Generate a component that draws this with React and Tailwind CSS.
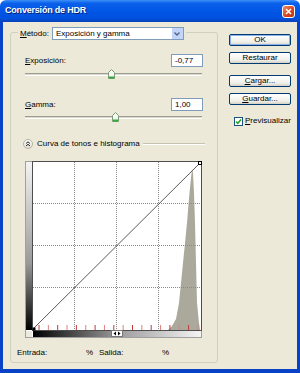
import React from "react";

function U({ children }) {
  return <span className="underline underline-offset-[1px]">{children}</span>;
}

function Thumb() {
  return (
    <svg width="7" height="10" viewBox="0 0 7 10" className="block">
      <path d="M0.5 3.5 L3.5 0.5 L6.5 3.5 V9.5 H0.5 Z" fill="#f7f7f2" stroke="#7d9a7d" />
      <rect x="1" y="7.5" width="5" height="2" fill="#2fb12f" />
    </svg>
  );
}

function Slider({ pos }) {
  return (
    <div className="relative h-[10px] w-[178px]">
      <div className="absolute left-0 right-[1px] top-[4px] h-[3px] border-t border-[#9d9c93] border-b border-b-white bg-[#dcd9cc]" />
      <div className="absolute top-0" style={{ left: pos }}>
        <Thumb />
      </div>
    </div>
  );
}

function Field({ value }) {
  return (
    <div className="w-[32px] h-[13px] bg-white border border-[#7f9db9] pl-[3px] leading-[11px]">{value}</div>
  );
}

function XpButton({ children, primary }) {
  return (
    <div
      className={
        "h-[12px] w-[62px] rounded-[2px] border border-[#003c74] bg-[linear-gradient(#ffffff,#f0f0ea_70%,#d6d0c5)] flex items-center justify-center leading-none " +
        (primary ? "shadow-[inset_0_0_0_1px_#8fb1ea]" : "")
      }
    >
      {children}
    </div>
  );
}

function CurveBox() {
  const ticks = Array.from({ length: 18 }, (_, i) => 14 + i * 9.35);
  const hist =
    "143,169 147,165 151,158 154,142 156,122 159,92 162,62 164,37 166,17 167,8 168,12 169,32 170,62 171,102 172,142 174,162 175,169";
  return (
    <svg width="177" height="177" viewBox="0 0 177 177" className="block">
      <defs>
        <linearGradient id="vg" x1="0" y1="0" x2="0" y2="1">
          <stop offset="0" stopColor="#f4f4f4" />
          <stop offset="0.6" stopColor="#9a9a9a" />
          <stop offset="1" stopColor="#000000" />
        </linearGradient>
        <linearGradient id="hg" x1="0" y1="0" x2="1" y2="0">
          <stop offset="0" stopColor="#000000" />
          <stop offset="0.5" stopColor="#9a9a9a" />
          <stop offset="1" stopColor="#f4f4f4" />
        </linearGradient>
      </defs>
      <rect x="0.5" y="0.5" width="176" height="176" fill="#ffffff" stroke="#a0a0a0" />
      <rect x="1" y="1" width="6" height="168" fill="url(#vg)" />
      <rect x="8" y="170" width="168" height="6" fill="url(#hg)" />
      <rect x="1" y="170" width="6" height="6" fill="#ebe9e0" />
      <polygon points={hist} fill="#aba99b" />
      <g stroke="#8a8a8a" strokeDasharray="1 1" strokeWidth="1">
        <line x1="49.5" y1="1" x2="49.5" y2="169" />
        <line x1="91.5" y1="1" x2="91.5" y2="169" />
        <line x1="133.5" y1="1" x2="133.5" y2="169" />
        <line x1="8" y1="42.5" x2="176" y2="42.5" />
        <line x1="8" y1="84.5" x2="176" y2="84.5" />
        <line x1="8" y1="126.5" x2="176" y2="126.5" />
      </g>
      <rect x="7.5" y="0.5" width="169" height="169" fill="none" stroke="#4e4e4e" />
      {ticks.map((x, i) => (
        <line
          key={i}
          x1={x}
          y1="164"
          x2={x}
          y2="169"
          stroke={i % 2 ? "#e07f7f" : "#c23a3c"}
          strokeWidth="1"
        />
      ))}
      <line x1="9" y1="167" x2="175" y2="2" stroke="#5a5a5a" strokeWidth="1" />
      <rect x="7.5" y="166.5" width="3" height="3" fill="#000" />
      <rect x="173.5" y="0.5" width="3" height="3" fill="#fff" stroke="#000" />
      <rect x="86.5" y="169.5" width="11" height="6" fill="#ffffff" stroke="#777" />
      <polygon points="88.5,172.5 91,170.5 91,174.5" fill="#000" />
      <polygon points="95.5,172.5 93,170.5 93,174.5" fill="#000" />
    </svg>
  );
}

export default function App() {
  return (
    <div className="w-[300px] h-[373px] flex flex-col font-['Liberation_Sans',Arial,sans-serif] text-[8px] text-black overflow-hidden">
      {/* title bar */}
      <div className="h-[22px] shrink-0 flex items-center justify-between pl-[5px] pr-[5px] rounded-t-[6px] bg-[linear-gradient(#3d8ff7_0%,#0a60ea_15%,#0055e5_55%,#0050dc_85%,#0842b8_100%)]">
        <span className="text-white font-bold text-[9px] tracking-[-0.2px] [text-shadow:1px_1px_0_#0a1f6e]">
          Conversión de HDR
        </span>
        <div className="w-[13px] h-[13px] rounded-[3px] border border-white bg-[linear-gradient(135deg,#f08a6a,#d8461e_55%,#b83412)] flex items-center justify-center">
          <svg width="7" height="7" viewBox="0 0 7 7">
            <path d="M1 1 L6 6 M6 1 L1 6" stroke="#fff" strokeWidth="1.6" />
          </svg>
        </div>
      </div>

      {/* body */}
      <div className="flex-1 flex bg-[#ece9d8] border-x-[3px] border-b-[4px] border-[#0842c6]">
        <div className="pl-[7px] pt-[10px]">
          <div className="w-[208px] h-[331px] border border-[#d0d0bf] rounded-[3px] flex flex-col pl-[14px] pr-[14px]">
            {/* header */}
            <div className="-mt-[6px] -ml-[7px] w-fit flex items-center bg-[#ece9d8] pl-[2px] pr-[2px]">
              <span className="mr-[3px]">
                <U>M</U>étodo:
              </span>
              <div className="w-[132px] h-[13px] bg-white border border-[#7f9db9] flex items-center">
                <span className="flex-1 pl-[3px]">Exposición y gamma</span>
                <div className="w-[11px] h-[11px] bg-[#c3d4fb] flex items-center justify-center">
                  <svg width="6" height="4" viewBox="0 0 6 4">
                    <path d="M0.5 0.5 L3 3 L5.5 0.5" fill="none" stroke="#4d6185" strokeWidth="1.3" />
                  </svg>
                </div>
              </div>
            </div>

            {/* exposición */}
            <div className="mt-[14px] flex items-center justify-between">
              <span>
                <U>E</U>xposición:
              </span>
              <Field value="-0,77" />
            </div>
            <div className="mt-[2px]">
              <Slider pos={83} />
            </div>

            {/* gamma */}
            <div className="mt-[19px] flex items-center justify-between">
              <span>
                <U>G</U>amma:
              </span>
              <Field value="1,00" />
            </div>
            <div className="mt-[1px]">
              <Slider pos={87} />
            </div>

            {/* curva */}
            <div className="mt-[16px] -ml-[2px] -mr-[2px] flex items-center">
              <div className="w-[10px] h-[10px] rounded-full border border-[#b5b2a5] bg-[linear-gradient(#ffffff,#e2dfd4)] flex items-center justify-center">
                <svg width="6" height="6" viewBox="0 0 6 6">
                  <path d="M1 2.5 L3 0.8 L5 2.5 M1 5 L3 3.3 L5 5" fill="none" stroke="#222" strokeWidth="1" />
                </svg>
              </div>
              <span className="ml-[4px]">Curva de tonos e histograma</span>
              <div className="flex-1 ml-[3px] h-[2px] border-t border-[#c5c2b2] border-b border-b-white" />
            </div>

            <div className="mt-[11px]">
              <CurveBox />
            </div>

            {/* entrada / salida */}
            <div className="mt-[9px] -ml-[8px] flex items-center">
              <span className="w-[69px]">Entrada:</span>
              <span className="w-[13px]">%</span>
              <span className="w-[63px]">Salida:</span>
              <span>%</span>
            </div>
          </div>
        </div>

        {/* buttons */}
        <div className="ml-[11px] pt-[12px] flex flex-col">
          <XpButton primary>OK</XpButton>
          <div className="mt-[6px]">
            <XpButton>Restaurar</XpButton>
          </div>
          <div className="mt-[11px]">
            <XpButton>
              <U>C</U>argar...
            </XpButton>
          </div>
          <div className="mt-[6px]">
            <XpButton>
              <U>G</U>uardar...
            </XpButton>
          </div>
          <div className="mt-[10px] ml-[5px] flex items-center">
            <div className="w-[9px] h-[9px] border border-[#1c5180] bg-white flex items-center justify-center">
              <svg width="7" height="7" viewBox="0 0 7 7">
                <path d="M1 3.5 L2.8 5.3 L6 1.5" fill="none" stroke="#21a121" strokeWidth="1.5" />
              </svg>
            </div>
            <span className="ml-[2px]">
              <U>P</U>revisualizar
            </span>
          </div>
        </div>
      </div>
    </div>
  );
}
